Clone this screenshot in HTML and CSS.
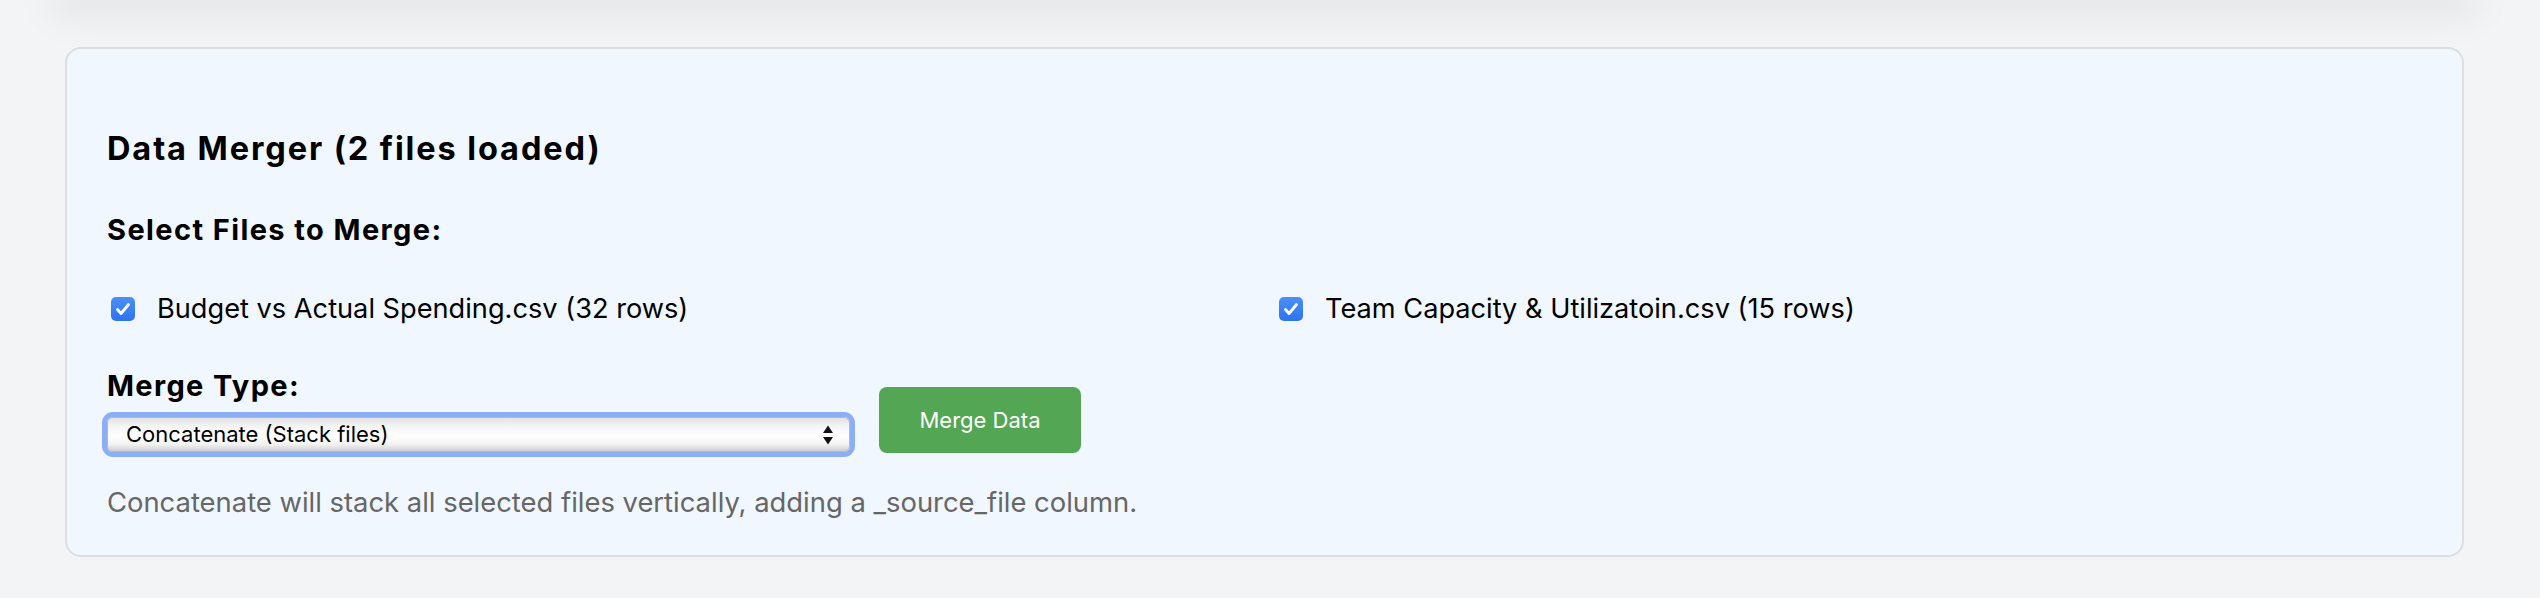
FILE: index.html
```html
<!DOCTYPE html>
<html lang="en">
<head>
<meta charset="utf-8">
<title>Data Merger</title>
<link rel="stylesheet" href="styles.css">
</head>
<body>
<div class="top-shadow"></div>
<main class="wrap">
  <section class="panel">
    <h3 class="title">Data Merger (2 files loaded)</h3>
    <h4 class="subtitle">Select Files to Merge:</h4>
    <div class="files">
      <label class="file">
        <span class="check"><svg viewBox="0 0 24 24" width="24" height="24"><path d="M6.5 12.5l3.6 4 7.4-9" fill="none" stroke="#fff" stroke-width="2.8" stroke-linecap="round" stroke-linejoin="round"/></svg></span>
        <span>Budget vs Actual Spending.csv (32 rows)</span>
      </label>
      <label class="file">
        <span class="check"><svg viewBox="0 0 24 24" width="24" height="24"><path d="M6.5 12.5l3.6 4 7.4-9" fill="none" stroke="#fff" stroke-width="2.8" stroke-linecap="round" stroke-linejoin="round"/></svg></span>
        <span>Team Capacity &amp; Utilizatoin.csv (15 rows)</span>
      </label>
    </div>
    <div class="controls">
      <div class="field">
        <label class="field-label" for="mt">Merge Type:</label>
        <div class="select-wrap">
          <select id="mt" class="select">
            <option>Concatenate (Stack files)</option>
            <option>Join on common column</option>
          </select>
          <svg class="arrows" viewBox="0 0 12 22" width="12" height="22"><path d="M6 1.5L11 9H1z" fill="#111"/><path d="M6 20.5L11 13H1z" fill="#111"/></svg>
        </div>
      </div>
      <button class="btn" type="button">Merge Data</button>
    </div>
    <p class="desc">Concatenate will stack all selected files vertically, adding a _source_file column.</p>
  </section>
</main>
</body>
</html>
```

FILE: styles.css
```css
* { box-sizing: border-box; }
html, body { margin: 0; padding: 0; }
body {
  background: #f3f4f6;
  font-family: Inter, "Noto Sans", "Liberation Sans", sans-serif;
  color: #000;
  overflow: hidden;
  height: 598px;
}
.top-shadow {
  height: 0;
  margin: 0 76px 0 65px;
  box-shadow: 0 0 38px 14px rgba(0, 0, 0, 0.08);
}
.wrap {
  margin: 47px 76px 0 65px;
}
.panel {
  background: #f0f7fe;
  border: 2px solid #dcdee2;
  border-radius: 16px;
  padding: 40px 40px 37px 40px;
  height: 510px;
}
.title {
  margin: 42px 0 0;
  font-size: 32.5px;
  line-height: 36px;
  font-weight: 700;
  letter-spacing: 1.9px;
}
.subtitle {
  margin: 47px 0 0;
  font-size: 29px;
  line-height: 32px;
  font-weight: 700;
  letter-spacing: 1.4px;
}
.files {
  display: grid;
  grid-template-columns: 1fr 1fr;
  column-gap: 21px;
  margin-top: 47.5px;
}
.file {
  display: flex;
  align-items: center;
  font-size: 27.2px;
  line-height: 30px;
}
.check {
  width: 24px;
  height: 24px;
  margin: 0 22px 0 4px;
  border-radius: 5px;
  background: linear-gradient(#4a8ff8, #2f73ee);
  display: flex;
  flex: none;
}
.controls {
  display: flex;
  align-items: flex-end;
  gap: 29px;
  margin-top: 46.5px;
}
.field { display: flex; flex-direction: column; }
.field-label {
  font-size: 29px;
  line-height: 32px;
  font-weight: 700;
  letter-spacing: 1.35px;
  margin-bottom: 14.5px;
}
.select-wrap {
  position: relative;
  width: 743px;
  height: 35px;
}
.select {
  appearance: none;
  -webkit-appearance: none;
  width: 100%;
  height: 35px;
  margin: 0;
  border: 1px solid #b9b9b9;
  border-radius: 6px;
  background: linear-gradient(#e3e3e3 0%, #f4f4f4 25%, #ffffff 55%, #f2f2f2 80%, #cfcfcf 100%);
  box-shadow: 0 0 0 5px #8dadf4;
  font-family: Inter, "Noto Sans", "Liberation Sans", sans-serif;
  font-size: 22px;
  color: #000;
  padding: 0 40px 0 18px;
  outline: none;
}
.arrows {
  position: absolute;
  right: 16px;
  top: 7px;
  pointer-events: none;
}
.btn {
  width: 202px;
  height: 66px;
  border: none;
  border-radius: 8px;
  background: #53a653;
  color: #fff;
  font-family: Inter, "Noto Sans", "Liberation Sans", sans-serif;
  font-size: 22px;
  padding: 0;
  margin-bottom: -1px;
}
.desc {
  margin: 35px 0 0;
  font-size: 27.4px;
  line-height: 30px;
  color: #666;
}
```
